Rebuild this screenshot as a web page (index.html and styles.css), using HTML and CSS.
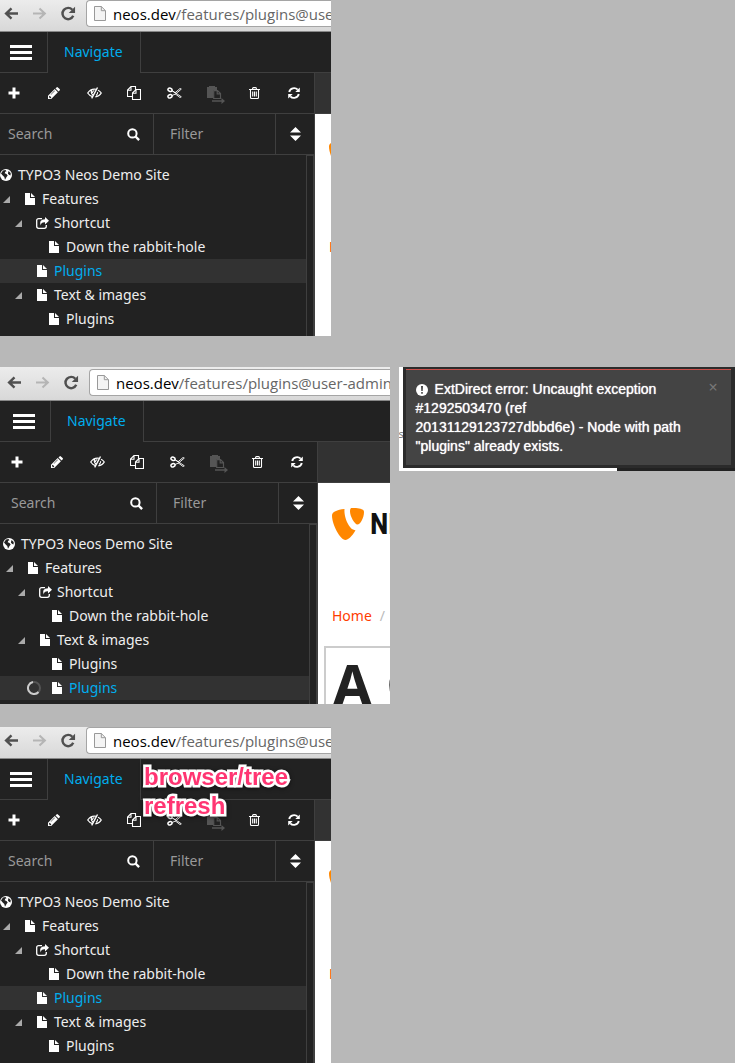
FILE: index.html
```html
<!DOCTYPE html>
<html lang="en">
<head>
<meta charset="utf-8">
<meta name="viewport" content="width=device-width, initial-scale=1">
<title>Neos node tree</title>
<link rel="stylesheet" href="styles.css">
</head>
<body>
<svg class="sprite" aria-hidden="true">
  <symbol id="back" viewBox="0 0 16 14"><path d="M15 7H3M8 1.500 2.200 7 8 12.500" fill="none" stroke="currentColor" stroke-width="2.600"/></symbol>
  <symbol id="forward" viewBox="0 0 16 14"><path d="M1 7h12M8 1.500 13.800 7 8 12.500" fill="none" stroke="currentColor" stroke-width="2.200"/></symbol>
  <symbol id="reload" viewBox="0 0 16 16"><path d="M12.600 4A6 6 0 1 0 13.600 10.500" fill="none" stroke="currentColor" stroke-width="2.600"/><path d="M15.500.8v6.700H8.800z" fill="currentColor"/></symbol>
  <symbol id="page" viewBox="0 0 12 15"><path d="M.5.5h6.800l4.200 4.200v9.800H.5z" fill="#f4f4f4" stroke="#999"/><path d="M7.300.5v4.200h4.200" fill="none" stroke="#999"/></symbol>
  <symbol id="plus" viewBox="0 0 12 12"><path d="M4.500.5h3v4h4v3h-4v4h-3v-4h-4v-3h4z" fill="currentColor"/></symbol>
  <symbol id="pencil" viewBox="0 0 12 12"><path fill-rule="evenodd" fill="currentColor" d="M0 12V8.800L6.700 2.100 9.900 5.300 3.200 12zM1 9.600v.9h.7v.7h.8l.8-.8-1.500-1.600zM6.500 3.600 2.700 7.400l.3.300 3.800-3.800zM7.500 1.400 8.500.4q.7-.7 1.400 0l1.700 1.700q.7.700 0 1.400l-1 1z"/></symbol>
  <symbol id="eye" viewBox="0 0 15 12"><path d="M5.600 9.700Q2.600 8.900.7 6 3.200 2.200 7.500 2.100q1.100 0 1.700.2M11 3.200Q13 4.200 14.300 6q-2.200 3.500-6 3.900M4.800 3.100Q3.300 6.100 6.200 8.200" fill="none" stroke="currentColor" stroke-width="1.200"/><path d="M7.300 3.500Q5.400 4 5.400 6M10.600 5.200Q10.900 7.300 9 8.500" fill="none" stroke="currentColor" stroke-width="1.100"/><path d="M10.500.5 4.700 11.300" stroke="currentColor" stroke-width="1.400"/></symbol>
  <symbol id="copy" viewBox="0 0 14 14"><path d="M5 10.500H.5V4L4 .5h4.500v3M.5 4.200H4V.5M5.500 7 9 3.500h4.500v10h-8zM5.500 7.200H9V3.500" fill="none" stroke="currentColor" stroke-width="1.100"/></symbol>
  <symbol id="cut" viewBox="0 0 15 12"><g fill="none" stroke="currentColor"><ellipse cx="3" cy="2.800" rx="2.100" ry="1.600" stroke-width="1.500" transform="rotate(20 3 2.800)"/><ellipse cx="3" cy="9.200" rx="2.100" ry="1.600" stroke-width="1.500" transform="rotate(-20 3 9.200)"/><path d="m5 3.800 3 2L13 1.500l1.300.6L8.500 7 5 8.500M5 3.500l9.300 6.300-1.300.7-5-3.800" stroke-width=".9"/></g></symbol>
  <symbol id="paste" viewBox="0 0 18 18"><path fill="currentColor" d="M0 1h2V0h6v1h2v3H6v8H0zM8 14.300h6.500V12L18 15l-3.500 3v-2.300H5v-1.400z"/><path d="M6.700 4.600h3.800l3 3v4.900H6.700zM10.200 4.600v3.300h3.300" fill="none" stroke="currentColor" stroke-width="1.200"/></symbol>
  <symbol id="trash" viewBox="0 0 11 12"><path d="M0 2.500h11M3.500 2.200Q3.500.6 4.500.6h2q1 0 1 1.600M1.500 2.800v7.700q0 1 1 1h6q1 0 1-1V2.800M3.700 4.500v5M5.500 4.500v5M7.300 4.500v5" fill="none" stroke="currentColor" stroke-width="1.100"/></symbol>
  <symbol id="refresh" viewBox="0 0 12 12"><path d="M1.200 5A5 5 0 0 1 9.700 2.700M10.800 7A5 5 0 0 1 2.300 9.300" fill="none" stroke="currentColor" stroke-width="1.900"/><path d="M11.800.5V5H7.300zM.2 11.500V7h4.500z" fill="currentColor"/></symbol>
  <symbol id="search" viewBox="0 0 13 13"><circle cx="5.400" cy="5.400" r="4.200" fill="none" stroke="currentColor" stroke-width="2"/><path d="m8.500 8.500 3.600 3.600" stroke="currentColor" stroke-width="2.400"/></symbol>
  <symbol id="sort" viewBox="0 0 11 14"><path d="M0 5.500 5.500 0 11 5.500zM0 8.500h11L5.500 14z" fill="currentColor"/></symbol>
  <symbol id="globe" viewBox="0 0 12 12"><circle cx="6" cy="6" r="6" fill="currentColor"/><path d="M3 1.500 5.500 1l1 1.200-1.300.6-.5 1.500L6.500 5l1.200 1.400-1 1.300L5 10.800 4.300 8 2.700 6.500 1 4.500z" fill="#222"/><path d="m8.500 2 2.200 2-.2 2.500-1.700-.8L8 4.200z" fill="#222"/></symbol>
  <symbol id="file" viewBox="0 0 11 12"><path d="M1 0h5v5h5v7H1zM7 0l4 4H7z" fill="currentColor"/></symbol>
  <symbol id="share" viewBox="0 0 13 12"><path d="M6 1.600H2.700Q.7 1.600.7 3.600v5.700q0 2 2 2h5.600q2 0 2-2V8" fill="none" stroke="currentColor" stroke-width="1.300"/><path d="M9 0l4 3.700L9 7.400V5.200Q5 5 4.800 8.500 2.300 2.700 9 2.200z" fill="currentColor"/></symbol>
  <symbol id="open" viewBox="0 0 7 7"><path d="M7 0v7H0z" fill="#aaa"/></symbol>
  <symbol id="loading" viewBox="0 0 14 14"><circle cx="7" cy="7" r="6" fill="none" stroke="#555" stroke-width="2"/><path d="M11.500 11A6 6 0 1 1 6 1.100" fill="none" stroke="#ccc" stroke-width="2"/></symbol>
  <symbol id="alert" viewBox="0 0 12 12"><circle cx="6" cy="6" r="6" fill="#fff"/><path d="M5 2h2l-.3 5H5.300zM5.200 8.100h1.600v1.700H5.200z" fill="#444"/></symbol>
  <symbol id="typo3" viewBox="0 0 32 32"><path fill="#ff8700" d="M12.500 1C11.800 9 17 22 23.500 22.300 20 28.500 16 32 13.500 32 8 32 0 16 0 7.500 0 4 5 1.700 12.500 1zM20 0c8 0 12 1 12 4 0 6-3.800 12.500-6.500 12.500C22.500 16.500 18 8 18 3.500 18 1 18.500 0 20 0z"/></symbol>
</svg>

<main class="board">
  <section class="shot" aria-label="Before moving">
    <header class="browser">
      <button class="nav-btn" aria-label="Back"><svg width="15" height="13"><use href="#back"/></svg></button>
      <button class="nav-btn dim" aria-label="Forward"><svg width="15" height="13"><use href="#forward"/></svg></button>
      <button class="nav-btn" aria-label="Reload"><svg width="16" height="15"><use href="#reload"/></svg></button>
      <div class="address"><svg width="12" height="15"><use href="#page"/></svg><span><b>neos.dev</b>/features/plugins@user</span></div>
    </header>
    <nav class="tabs"><button class="menu" aria-label="Menu"><i></i><i></i><i></i></button><a class="tab" href="#navigate">Navigate</a><span class="tabs-rest"></span></nav>
    <div class="workspace">
      <aside class="sidebar">
        <div class="toolbar">
          <button aria-label="New"><svg width="12" height="12"><use href="#plus"/></svg></button>
          <button aria-label="Edit"><svg width="12" height="12"><use href="#pencil"/></svg></button>
          <button aria-label="Hide"><svg width="15" height="12"><use href="#eye"/></svg></button>
          <button aria-label="Copy"><svg width="14" height="14"><use href="#copy"/></svg></button>
          <button aria-label="Cut"><svg width="15" height="12"><use href="#cut"/></svg></button>
          <button class="off" aria-label="Paste"><svg width="18" height="18"><use href="#paste"/></svg></button>
          <button aria-label="Delete"><svg width="11" height="12"><use href="#trash"/></svg></button>
          <button aria-label="Refresh"><svg width="12" height="12"><use href="#refresh"/></svg></button>
        </div>
        <div class="filters">
          <label class="search"><input type="text" placeholder="Search" aria-label="Search"><svg width="13" height="13"><use href="#search"/></svg></label>
          <label class="filter"><select aria-label="Filter"><option>Filter</option></select><span><svg width="11" height="14"><use href="#sort"/></svg></span></label>
        </div>
        <div class="tree-wrap">
          <ul class="tree">
            <li class="root"><svg width="12" height="12"><use href="#globe"/></svg>TYPO3 Neos Demo Site</li>
            <li class="l1"><span class="toggle"><svg width="7" height="7"><use href="#open"/></svg></span><svg width="11" height="12"><use href="#file"/></svg>Features</li>
            <li class="l2"><span class="toggle"><svg width="7" height="7"><use href="#open"/></svg></span><svg width="13" height="12"><use href="#share"/></svg>Shortcut</li>
            <li class="l3"><span class="toggle"></span><svg width="11" height="12"><use href="#file"/></svg>Down the rabbit-hole</li>
            <li class="l2 active"><span class="toggle"></span><svg width="11" height="12"><use href="#file"/></svg>Plugins</li>
            <li class="l2"><span class="toggle"><svg width="7" height="7"><use href="#open"/></svg></span><svg width="11" height="12"><use href="#file"/></svg>Text &amp; images</li>
            <li class="l3"><span class="toggle"></span><svg width="11" height="12"><use href="#file"/></svg>Plugins</li>
          </ul>
          <div class="track"></div>
        </div>
      </aside>
      <div class="content">
        <div class="content-bar"></div>
        <div class="logo"><svg width="32" height="32"><use href="#typo3"/></svg></div>
        <div class="crumbs"><a href="#home">Home</a></div>
      </div>
    </div>
  </section>

  <div class="pair">
    <section class="shot wide" aria-label="After moving">
      <header class="browser">
        <button class="nav-btn" aria-label="Back"><svg width="15" height="13"><use href="#back"/></svg></button>
        <button class="nav-btn dim" aria-label="Forward"><svg width="15" height="13"><use href="#forward"/></svg></button>
        <button class="nav-btn" aria-label="Reload"><svg width="16" height="15"><use href="#reload"/></svg></button>
        <div class="address"><svg width="12" height="15"><use href="#page"/></svg><span><b>neos.dev</b>/features/plugins@user-admin.</span></div>
      </header>
      <nav class="tabs"><button class="menu" aria-label="Menu"><i></i><i></i><i></i></button><a class="tab" href="#navigate">Navigate</a><span class="tabs-rest"></span></nav>
      <div class="workspace">
        <aside class="sidebar">
          <div class="toolbar">
            <button aria-label="New"><svg width="12" height="12"><use href="#plus"/></svg></button>
            <button aria-label="Edit"><svg width="12" height="12"><use href="#pencil"/></svg></button>
            <button aria-label="Hide"><svg width="15" height="12"><use href="#eye"/></svg></button>
            <button aria-label="Copy"><svg width="14" height="14"><use href="#copy"/></svg></button>
            <button aria-label="Cut"><svg width="15" height="12"><use href="#cut"/></svg></button>
            <button class="off" aria-label="Paste"><svg width="18" height="18"><use href="#paste"/></svg></button>
            <button aria-label="Delete"><svg width="11" height="12"><use href="#trash"/></svg></button>
            <button aria-label="Refresh"><svg width="12" height="12"><use href="#refresh"/></svg></button>
          </div>
          <div class="filters">
            <label class="search"><input type="text" placeholder="Search" aria-label="Search"><svg width="13" height="13"><use href="#search"/></svg></label>
            <label class="filter"><select aria-label="Filter"><option>Filter</option></select><span><svg width="11" height="14"><use href="#sort"/></svg></span></label>
          </div>
          <div class="tree-wrap">
            <ul class="tree">
              <li class="root"><svg width="12" height="12"><use href="#globe"/></svg>TYPO3 Neos Demo Site</li>
              <li class="l1"><span class="toggle"><svg width="7" height="7"><use href="#open"/></svg></span><svg width="11" height="12"><use href="#file"/></svg>Features</li>
              <li class="l2"><span class="toggle"><svg width="7" height="7"><use href="#open"/></svg></span><svg width="13" height="12"><use href="#share"/></svg>Shortcut</li>
              <li class="l3"><span class="toggle"></span><svg width="11" height="12"><use href="#file"/></svg>Down the rabbit-hole</li>
              <li class="l2"><span class="toggle"><svg width="7" height="7"><use href="#open"/></svg></span><svg width="11" height="12"><use href="#file"/></svg>Text &amp; images</li>
              <li class="l3"><span class="toggle"></span><svg width="11" height="12"><use href="#file"/></svg>Plugins</li>
              <li class="l3 active"><span class="toggle busy"><svg width="14" height="14"><use href="#loading"/></svg></span><svg width="11" height="12"><use href="#file"/></svg>Plugins</li>
            </ul>
            <div class="track"></div>
          </div>
        </aside>
        <div class="content">
          <div class="content-bar"></div>
          <div class="logo"><svg width="32" height="32"><use href="#typo3"/></svg><span>NE</span></div>
          <div class="crumbs"><a href="#home">Home</a><span>/</span></div>
          <h1 class="headline">A C</h1>
        </div>
      </div>
    </section>

    <section class="notice">
      <div class="notice-row">
        <span class="sliver">s</span>
        <div class="toast" role="alert">
          <p><svg width="12" height="12"><use href="#alert"/></svg>ExtDirect error: Uncaught exception #1292503470 (ref 20131129123727dbbd6e) - Node with path "plugins" already exists.</p>
          <button aria-label="Close">×</button>
        </div>
      </div>
      <div class="notice-base"></div>
    </section>
  </div>

  <section class="shot" aria-label="After refresh">
    <header class="browser">
      <button class="nav-btn" aria-label="Back"><svg width="15" height="13"><use href="#back"/></svg></button>
      <button class="nav-btn dim" aria-label="Forward"><svg width="15" height="13"><use href="#forward"/></svg></button>
      <button class="nav-btn" aria-label="Reload"><svg width="16" height="15"><use href="#reload"/></svg></button>
      <div class="address"><svg width="12" height="15"><use href="#page"/></svg><span><b>neos.dev</b>/features/plugins@user</span></div>
    </header>
    <nav class="tabs"><button class="menu" aria-label="Menu"><i></i><i></i><i></i></button><a class="tab" href="#navigate">Navigate</a><span class="tabs-rest"></span></nav>
    <p class="remark">browser/tree<br>refresh</p>
    <div class="workspace">
      <aside class="sidebar">
        <div class="toolbar">
          <button aria-label="New"><svg width="12" height="12"><use href="#plus"/></svg></button>
          <button aria-label="Edit"><svg width="12" height="12"><use href="#pencil"/></svg></button>
          <button aria-label="Hide"><svg width="15" height="12"><use href="#eye"/></svg></button>
          <button aria-label="Copy"><svg width="14" height="14"><use href="#copy"/></svg></button>
          <button aria-label="Cut"><svg width="15" height="12"><use href="#cut"/></svg></button>
          <button class="off" aria-label="Paste"><svg width="18" height="18"><use href="#paste"/></svg></button>
          <button aria-label="Delete"><svg width="11" height="12"><use href="#trash"/></svg></button>
          <button aria-label="Refresh"><svg width="12" height="12"><use href="#refresh"/></svg></button>
        </div>
        <div class="filters">
          <label class="search"><input type="text" placeholder="Search" aria-label="Search"><svg width="13" height="13"><use href="#search"/></svg></label>
          <label class="filter"><select aria-label="Filter"><option>Filter</option></select><span><svg width="11" height="14"><use href="#sort"/></svg></span></label>
        </div>
        <div class="tree-wrap">
          <ul class="tree">
            <li class="root"><svg width="12" height="12"><use href="#globe"/></svg>TYPO3 Neos Demo Site</li>
            <li class="l1"><span class="toggle"><svg width="7" height="7"><use href="#open"/></svg></span><svg width="11" height="12"><use href="#file"/></svg>Features</li>
            <li class="l2"><span class="toggle"><svg width="7" height="7"><use href="#open"/></svg></span><svg width="13" height="12"><use href="#share"/></svg>Shortcut</li>
            <li class="l3"><span class="toggle"></span><svg width="11" height="12"><use href="#file"/></svg>Down the rabbit-hole</li>
            <li class="l2 active"><span class="toggle"></span><svg width="11" height="12"><use href="#file"/></svg>Plugins</li>
            <li class="l2"><span class="toggle"><svg width="7" height="7"><use href="#open"/></svg></span><svg width="11" height="12"><use href="#file"/></svg>Text &amp; images</li>
            <li class="l3"><span class="toggle"></span><svg width="11" height="12"><use href="#file"/></svg>Plugins</li>
          </ul>
          <div class="track"></div>
        </div>
      </aside>
      <div class="content">
        <div class="content-bar"></div>
        <div class="logo"><svg width="32" height="32"><use href="#typo3"/></svg></div>
        <div class="crumbs"><a href="#home">Home</a></div>
      </div>
    </div>
  </section>
</main>
</body>
</html>
```

FILE: styles.css
```css
* { box-sizing: border-box; }
body { margin: 0; background: #b8b8b8; color: #fff; font: 14px/24px "Noto Sans", sans-serif; }
button, input, select { margin: 0; padding: 0; border: 0; background: none; color: inherit; font: inherit; }
a { text-decoration: none; }
svg { display: block; flex: none; }
.sprite { position: absolute; width: 0; height: 0; }

.shot { --inset: 0px; position: relative; width: 45%; overflow: hidden; background: #222; }
.wide { --inset: 3px; width: 53%; }
.pair { display: flex; align-items: flex-start; margin: 31px 0 23px; }

/* Browser chrome */
.browser { display: flex; height: 32px; padding-left: calc(4px + var(--inset)); background: linear-gradient(#ececec, #d8d8d8); border-bottom: 1px solid #888; }
.wide .browser { height: 34px; padding-top: 2px; }
.nav-btn { display: flex; flex: none; align-items: center; width: 28px; height: 27px; color: #505050; }
.nav-btn.dim { color: #b5b5b5; }
.address { display: flex; flex: 1; align-items: center; gap: 7px; min-width: 0; height: 27px; margin-left: -2px; padding-left: 7px; overflow: hidden; border: 1px solid #a5a5a5; border-right: 0; border-radius: 4px 0 0 4px; background: #fff; color: #666; font-family: "Open Sans", sans-serif; font-size: 15px; white-space: nowrap; }
.address b { color: #000; font-weight: 400; }

/* Tabs */
.tabs { display: flex; height: 41px; }
.menu { display: flex; flex: none; flex-direction: column; justify-content: center; gap: 3px; width: calc(48px + var(--inset)); padding-left: calc(10px + var(--inset)); border: solid #3f3f3f; border-width: 0 1px 1px 0; }
.menu i { width: 22px; height: 3px; background: #fff; }
.tab { flex: none; width: 92px; padding: 0 16px; color: #00adee; line-height: 40px; }
.tabs-rest { flex: 1; border: solid #3f3f3f; border-width: 0 0 1px 1px; }

/* Sidebar */
.workspace { display: flex; }
.sidebar { flex: none; width: calc(315px + var(--inset)); border-right: 1px solid #3f3f3f; }
.toolbar { display: flex; gap: 12px; height: 41px; padding-left: var(--inset); border-bottom: 1px solid #3f3f3f; }
.toolbar button { display: flex; align-items: center; justify-content: center; width: 28px; }
.toolbar .off { padding: 4px 0 0 4px; color: #555; }
.filters { display: flex; height: 41px; border-bottom: 1px solid #3f3f3f; color: #999; }
.search { display: flex; flex: none; align-items: center; width: calc(154px + var(--inset)); padding: 0 13px 0 calc(8px + var(--inset)); border-right: 1px solid #3f3f3f; }
.search input { flex: 1; min-width: 0; outline: 0; }
.search input::placeholder { color: #999; opacity: 1; }
.search svg, .filter svg { color: #fff; }
.filter { display: flex; flex: 1; }
.filter select { width: 122px; padding-left: 16px; border-right: 1px solid #3f3f3f; appearance: none; }
.filter span { display: flex; flex: 1; align-items: center; justify-content: center; }
.tree-wrap { display: flex; }
.tree { flex: 1; margin: 0; padding: 8px 0 5px; list-style: none; }
.wide .tree { padding-bottom: 4px; }
.tree li { display: flex; align-items: center; height: 24px; padding-left: var(--inset); color: #eee; }
.tree li > svg { margin-right: 7px; color: #fff; }
.tree .root > svg { margin-right: 6px; }
.tree svg[width="13"] { margin-right: 5px; }
.tree .l2 { padding-left: calc(12px + var(--inset)); }
.tree .l3 { padding-left: calc(24px + var(--inset)); }
.tree .active { background: #323232; color: #00adee; }
.toggle { flex: none; width: 24px; padding-left: 3px; }
.toggle.busy { padding-left: 0; }
.track { width: 8px; border: solid #3f3f3f; border-width: 1px 1px 0; }

/* Page preview */
.content { flex: 1; min-width: 0; overflow: hidden; background: #fff; }
.content-bar { height: 41px; background: #323232; border-bottom: 1px solid #3f3f3f; }
.logo { display: flex; align-items: center; gap: 6px; margin: 25px 0 0 14px; height: 32px; color: #111; font: bold 30px/40px "Roboto Condensed", "Open Sans Condensed", "DejaVu Sans Condensed", sans-serif; }
.crumbs { display: flex; gap: 8px; margin: 64px 0 0 14px; }
.crumbs a { color: #ff3c00; }
.crumbs span { color: #bbb; }
.headline { height: 58px; margin: 18px 0 0 6px; padding-left: 7px; overflow: hidden; border: solid #ccc; border-width: 2px 0 0 2px; color: #222; font: bold 56px/70px "Noto Sans", sans-serif; white-space: nowrap; }

/* Notification */
.notice { flex: 1; min-width: 0; margin-left: 9px; }
.notice-row { display: flex; }
.sliver { display: flex; flex: none; align-items: center; width: 4px; padding-top: 32px; overflow: hidden; background: #fff; color: #777; font-size: 11px; }
.toast { display: flex; flex: 1; min-width: 0; align-items: flex-start; padding: 11px 10px 9px 10px; border: solid #2b2b2b; border-width: 2px 4px 3px 3px; background: #444; box-shadow: inset 0 1px #c8504b; }
.toast p { flex: 1; margin: 0 18px 0 0; font: 14px/19px "Liberation Sans", Arial, sans-serif; text-shadow: 0 0 1px #fff; }
.toast p svg { display: inline-block; margin-right: 7px; vertical-align: -2px; }
.toast button { width: 16px; color: #777; font-size: 16px; line-height: 14px; }
.notice-base { height: 3px; background: linear-gradient(90deg, #fff 65%, #222 65%); }

.remark { position: absolute; z-index: 1; top: 35px; left: 144px; margin: 0; color: #ff3572; font: bold 24px/29px "Liberation Sans", Arial, sans-serif; -webkit-text-stroke: 5px #fff; paint-order: stroke fill; filter: drop-shadow(0 1px 2px #0008); }
```
